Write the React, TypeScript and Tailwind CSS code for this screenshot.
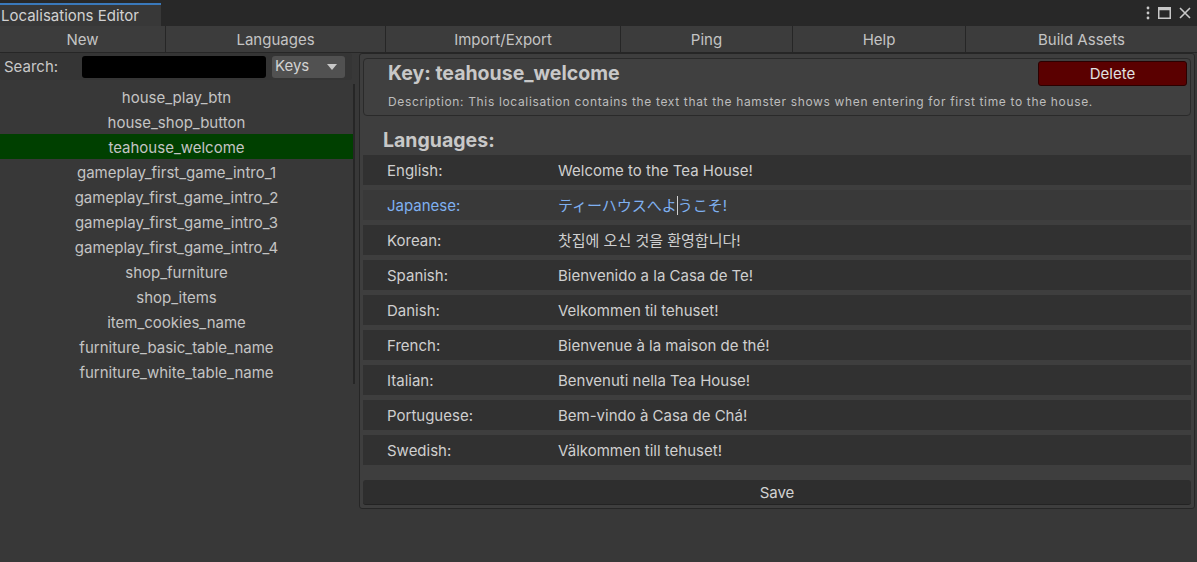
import React from "react";

const keys = [
  "house_play_btn",
  "house_shop_button",
  "teahouse_welcome",
  "gameplay_first_game_intro_1",
  "gameplay_first_game_intro_2",
  "gameplay_first_game_intro_3",
  "gameplay_first_game_intro_4",
  "shop_furniture",
  "shop_items",
  "item_cookies_name",
  "furniture_basic_table_name",
  "furniture_white_table_name",
];

const tabs = [
  { label: "New", w: "w-[166px]" },
  { label: "Languages", w: "w-[220px]" },
  { label: "Import/Export", w: "w-[235px]" },
  { label: "Ping", w: "w-[172px]" },
  { label: "Help", w: "w-[173px]" },
  { label: "Build Assets", w: "flex-1" },
];

const translations = [
  { lang: "English", text: "Welcome to the Tea House!" },
  { lang: "Japanese", text: "ティーハウスへようこそ!", active: true },
  { lang: "Korean", text: "찻집에 오신 것을 환영합니다!" },
  { lang: "Spanish", text: "Bienvenido a la Casa de Te!" },
  { lang: "Danish", text: "Velkommen til tehuset!" },
  { lang: "French", text: "Bienvenue à la maison de thé!" },
  { lang: "Italian", text: "Benvenuti nella Tea House!" },
  { lang: "Portuguese", text: "Bem-vindo à Casa de Chá!" },
  { lang: "Swedish", text: "Välkommen till tehuset!" },
];

function TitleBar() {
  return (
    <div className="h-[26px] bg-[#282828] flex items-end justify-between">
      <div className="w-[161px] h-[23px] bg-[#383838] border-t-2 border-[#3a79bb] pl-[1px] pt-[1px] text-[15px] leading-[20px] text-[#d2d2d2] whitespace-nowrap">
        Localisations Editor
      </div>
      <div className="flex items-center gap-[8px] h-[26px] pr-[6px] text-[#c8c8c8]">
        {/* kebab */}
        <svg viewBox="0 0 4 14" className="w-[4px] h-[14px]">
          <circle cx="2" cy="2" r="1.4" fill="currentColor" />
          <circle cx="2" cy="7" r="1.4" fill="currentColor" />
          <circle cx="2" cy="12" r="1.4" fill="currentColor" />
        </svg>
        {/* maximize */}
        <svg viewBox="0 0 13 12" className="w-[13px] h-[12px]">
          <rect x="0.75" y="0.75" width="11.5" height="10.5" fill="none" stroke="currentColor" strokeWidth="1.5" />
          <rect x="0.75" y="0.75" width="11.5" height="2.5" fill="currentColor" />
        </svg>
        {/* close */}
        <svg viewBox="0 0 12 12" className="w-[12px] h-[12px]">
          <path d="M1 1L11 11M11 1L1 11" stroke="currentColor" strokeWidth="1.6" />
        </svg>
      </div>
    </div>
  );
}

function Toolbar() {
  return (
    <div className="h-[27px] flex bg-[#3c3c3c] border-b border-[#262626]">
      {tabs.map((t, i) => (
        <div
          key={t.label}
          className={`${t.w} h-full pt-[2px] flex items-center justify-center text-[15px] text-[#c4c4c4] ${
            i < tabs.length - 1 ? "border-r border-[#262626]" : ""
          }`}
        >
          {t.label}
        </div>
      ))}
    </div>
  );
}

function KeyList() {
  return (
    <div className="w-[355px] shrink-0 flex flex-col">
      <div className="w-[352px] h-[27px] bg-[#353535] rounded-[3px] flex items-center">
        <span className="pl-[4px] pt-[1px] w-[82px] text-[15px] text-[#c8c8c8]">Search:</span>
        <div className="w-[184px] h-[22px] bg-black rounded-[3px]" />
        <div className="ml-[6px] w-[73px] h-[22px] bg-[#515151] rounded-[3px] flex items-center justify-between pl-[3px] pr-[8px] text-[15px] text-[#d2d2d2]">
          Keys
          <svg viewBox="0 0 10 6" className="w-[10px] h-[6px]">
            <path d="M0 0H10L5 6Z" fill="#c8c8c8" />
          </svg>
        </div>
      </div>
      <div className="mt-[4px] w-[355px] border-r-2 border-[#262626]">
        {keys.map((k) => (
          <div
            key={k}
            className={`h-[25px] pt-[3px] flex items-center justify-center text-[15px] text-[#c4c4c4] ${
              k === "teahouse_welcome" ? "bg-[#004000]" : ""
            }`}
          >
            {k}
          </div>
        ))}
      </div>
    </div>
  );
}

function Editor() {
  return (
    <div className="ml-[4px] mr-[2px] w-[836px] h-[456px] bg-[#3e3e3e] border border-[#262626] rounded-[3px] px-[3px] pt-[4px]">
      <div className="h-[58px] border border-[#2a2a2a] rounded-[4px] bg-[#404040] flex flex-col">
        <div className="flex items-start justify-between">
          <div className="pl-[24px] pt-[1px] text-[19.5px] font-bold text-[#c8c8c8] leading-[26px]">
            Key: teahouse_welcome
          </div>
          <div className="mt-[2px] mr-[3px] w-[149px] h-[25px] pt-[2px] bg-[#5a0000] border border-[#2b0000] rounded-[3px] flex items-center justify-center text-[15px] text-[#e0e0e0]">
            Delete
          </div>
        </div>
        <div className="pl-[24px] mt-[8px] text-[12px] tracking-[0.65px] text-[#bdbdbd] leading-[16px] whitespace-nowrap">
          Description: This localisation contains the text that the hamster shows when entering for first time to the house.
        </div>
      </div>
      <div className="pl-[20px] mt-[11px] h-[26px] text-[19.5px] font-bold text-[#c8c8c8] leading-[26px]">
        Languages:
      </div>
      <div className="mt-[2px] flex flex-col gap-[5px]">
        {translations.map((t) => (
          <div
            key={t.lang}
            className={`h-[30px] pt-[3px] flex items-center text-[15px] ${
              t.active ? "bg-[#393939] text-[#7fb0f0]" : "bg-[#313131] text-[#cfcfcf]"
            }`}
          >
            <span className="pl-[24px] w-[195px]">{t.lang}:</span>
            <span>
              {t.active ? (
                <>
                  ティーハウスへよ<span className="border-l border-[#d0d0d0]" />うこそ!
                </>
              ) : (
                t.text
              )}
            </span>
          </div>
        ))}
      </div>
      <div className="mt-[15px] h-[25px] pt-[3px] bg-[#2e2e2e] rounded-[3px] border-b border-[#232323] flex items-center justify-center text-[15px] text-[#d2d2d2]">
        Save
      </div>
    </div>
  );
}

export default function App() {
  return (
    <div
      className="w-[1197px] h-[562px] bg-[#383838] flex flex-col overflow-hidden"
      style={{ fontFamily: "Inter, 'Noto Sans CJK JP', 'Noto Sans CJK KR', sans-serif" }}
    >
      <TitleBar />
      <Toolbar />
      <div className="flex">
        <KeyList />
        <Editor />
      </div>
    </div>
  );
}
